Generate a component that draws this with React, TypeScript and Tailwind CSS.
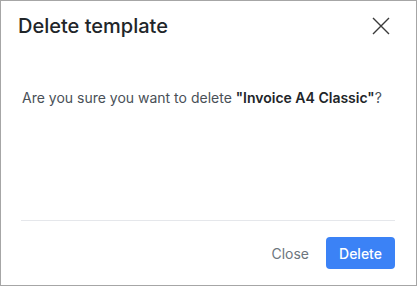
import React from 'react';

const App = () => {
  return (
    <div className="w-[417px] h-[286px] bg-white border border-[#a6a6a6] flex flex-col font-[family-name:Inter,sans-serif]">
      <div className="flex items-center justify-between pl-[17px] pr-[26px] pt-[10px] h-[40px]">
        <h2 className="text-[20px] font-medium text-[#212529]">Delete template</h2>
        <button className="text-[#3a3a3a] -mt-[1px]">
          <svg width="18" height="18" viewBox="0 0 18 18" fill="none" stroke="currentColor" strokeWidth="1.4">
            <path d="M1 1L17 17M17 1L1 17" />
          </svg>
        </button>
      </div>
      <div className="flex-1 px-[21px] pt-[46px]">
        <p className="text-[14px] text-[#495057]">
          Are you sure you want to delete <span className="font-semibold text-[#212529]">"Invoice A4 Classic"</span>?
        </p>
      </div>
      <div className="ml-[20px] mr-[21px] border-t border-[#e5e7eb] flex justify-end items-center gap-[17px] pt-[16px] pb-[16px]">
        <button className="text-[14px] text-[#6c757d]">Close</button>
        <button className="h-[32px] w-[69px] rounded-[4px] bg-[#3b82f6] text-white text-[14px] font-medium">Delete</button>
      </div>
    </div>
  );
};

export default App;
